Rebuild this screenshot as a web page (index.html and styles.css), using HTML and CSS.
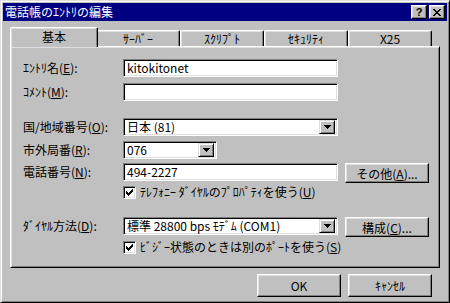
FILE: index.html
```html
<!DOCTYPE html>
<html lang="ja">
<head>
<meta charset="utf-8">
<title>電話帳のｴﾝﾄﾘの編集</title>
<link rel="stylesheet" href="styles.css">
</head>
<body>
<div class="window">
  <div class="titlebar">
    <span class="title">電話帳のｴﾝﾄﾘの編集</span>
    <div class="tb-buttons">
      <div class="tb-btn help">?</div>
      <div class="tb-btn close">
        <svg width="8" height="7" viewBox="0 0 8 7" shape-rendering="crispEdges"><path d="M0 0h2v1h-2zM6 0h2v1h-2zM1 1h2v1h-2zM5 1h2v1h-2zM2 2h4v1h-4zM3 3h2v1h-2zM2 4h4v1h-4zM1 5h2v1h-2zM5 5h2v1h-2zM0 6h2v1h-2zM6 6h2v1h-2z" fill="#000"/></svg>
      </div>
    </div>
  </div>
  <div class="body">
    <div class="tabs">
      <div class="tab active">基本</div>
      <div class="tab">ｻｰﾊﾞｰ</div>
      <div class="tab">ｽｸﾘﾌﾟﾄ</div>
      <div class="tab">ｾｷｭﾘﾃｨ</div>
      <div class="tab">X25</div>
    </div>
    <div class="panel">
      <div class="row r1">
        <div class="label">ｴﾝﾄﾘ名(<u>E</u>):</div>
        <div class="field wide">kitokitonet</div>
      </div>
      <div class="row r2">
        <div class="label">ｺﾒﾝﾄ(<u>M</u>):</div>
        <div class="field wide"></div>
      </div>
      <div class="row r3">
        <div class="label">国/地域番号(<u>O</u>):</div>
        <div class="field wide select"><span class="val">日本 (81)</span><span class="arrow"><svg width="7" height="4" viewBox="0 0 7 4" shape-rendering="crispEdges"><path d="M0 0h7v1h-7zM1 1h5v1h-5zM2 2h3v1h-3zM3 3h1v1h-1z" fill="#000"/></svg></span></div>
      </div>
      <div class="row r4">
        <div class="label">市外局番(<u>R</u>):</div>
        <div class="field narrow select"><span class="val">076</span><span class="arrow"><svg width="7" height="4" viewBox="0 0 7 4" shape-rendering="crispEdges"><path d="M0 0h7v1h-7zM1 1h5v1h-5zM2 2h3v1h-3zM3 3h1v1h-1z" fill="#000"/></svg></span></div>
      </div>
      <div class="row r5">
        <div class="label">電話番号(<u>N</u>):</div>
        <div class="field wide">494-2227</div>
        <div class="btn side">その他(<u>A</u>)...</div>
      </div>
      <div class="check-row c1">
        <span class="checkbox"><svg width="9" height="9" viewBox="0 0 9 9" shape-rendering="crispEdges"><path d="M7 1h1v1h-1zM6 2h2v1h-2zM1 3h1v1h-1zM5 3h3v1h-3zM1 4h2v1h-2zM4 4h3v1h-3zM1 5h5v1h-5zM2 6h3v1h-3zM3 7h1v1h-1z" fill="#000"/></svg></span>
        <span class="check-label">ﾃﾚﾌｫﾆｰ ﾀﾞｲﾔﾙのﾌﾟﾛﾊﾟﾃｨを使う(<u>U</u>)</span>
      </div>
      <div class="row r6">
        <div class="label">ﾀﾞｲﾔﾙ方法(<u>D</u>):</div>
        <div class="field wide select"><span class="val">標準 28800 bps ﾓﾃﾞﾑ (COM1)</span><span class="arrow"><svg width="7" height="4" viewBox="0 0 7 4" shape-rendering="crispEdges"><path d="M0 0h7v1h-7zM1 1h5v1h-5zM2 2h3v1h-3zM3 3h1v1h-1z" fill="#000"/></svg></span></div>
        <div class="btn side">構成(<u>C</u>)...</div>
      </div>
      <div class="check-row c2">
        <span class="checkbox"><svg width="9" height="9" viewBox="0 0 9 9" shape-rendering="crispEdges"><path d="M7 1h1v1h-1zM6 2h2v1h-2zM1 3h1v1h-1zM5 3h3v1h-3zM1 4h2v1h-2zM4 4h3v1h-3zM1 5h5v1h-5zM2 6h3v1h-3zM3 7h1v1h-1z" fill="#000"/></svg></span>
        <span class="check-label">ﾋﾞｼﾞｰ状態のときは別のﾎﾟｰﾄを使う(<u>S</u>)</span>
      </div>
    </div>
    <div class="footer">
      <div class="btn dlg">OK</div>
      <div class="btn dlg">ｷｬﾝｾﾙ</div>
    </div>
  </div>
</div>
</body>
</html>
```

FILE: styles.css
```css
* { box-sizing: border-box; }
html, body { margin: 0; padding: 0; background: #c0c0c0; }
body {
  font-family: "MS UI Gothic", "Noto Sans CJK JP", sans-serif;
  font-size: 12px;
  color: #000;
}
u { text-decoration: underline; text-underline-offset: 1px; }

.window {
  width: 450px;
  height: 303px;
  background: #c0c0c0;
  border: 1px solid;
  border-color: #dfdfdf #000 #000 #dfdfdf;
  box-shadow: inset 1px 1px #fff, inset -1px -1px #808080;
  padding: 2px;
  display: flex;
  flex-direction: column;
}

.titlebar {
  height: 18px;
  background: #000080;
  color: #fff;
  display: flex;
  align-items: center;
  justify-content: space-between;
  padding: 0 2px 0 2px;
}
.title { font-size: 12px; line-height: 18px; letter-spacing: 0; }
.tb-buttons { display: flex; gap: 2px; }
.tb-btn {
  width: 16px;
  height: 14px;
  background: #c0c0c0;
  border: 1px solid;
  border-color: #fff #000 #000 #fff;
  box-shadow: inset -1px -1px #808080, inset 1px 1px #dfdfdf;
  display: flex;
  align-items: center;
  justify-content: center;
  color: #000;
}
.tb-btn.help {
  font-family: "Liberation Sans", sans-serif;
  font-weight: bold;
  font-size: 11px;
  line-height: 12px;
}

.body {
  flex: 1;
  display: flex;
  flex-direction: column;
  padding: 6px 7px 0 7px;
}

.tabs {
  display: flex;
  height: 19px;
  padding-left: 2px;
  position: relative;
  z-index: 1;
}
.tab {
  width: 84px;
  height: 16px;
  margin-top: 3px;
  background: #c0c0c0;
  border-top: 1px solid #fff;
  border-left: 1px solid #fff;
  border-right: 1px solid #000;
  border-radius: 2px 2px 0 0;
  box-shadow: inset -1px 0 #808080, inset 1px 1px #dfdfdf;
  text-align: center;
  line-height: 15px;
}
.tab.active {
  width: 88px;
  height: 20px;
  margin: 0 -2px 0 -2px;
  position: relative;
  z-index: 2;
  line-height: 17px;
}

.panel {
  width: 430px;
  height: 222px;
  border: 1px solid;
  border-color: #fff #000 #000 #fff;
  box-shadow: inset 1px 1px #dfdfdf, inset -1px -1px #808080;
  padding-left: 12px;
  display: flex;
  flex-direction: column;
}

.row {
  display: flex;
  align-items: flex-start;
}
.label {
  width: 100px;
  height: 18px;
  line-height: 18px;
  white-space: nowrap;
}
.field {
  height: 18px;
  background: #fff;
  border: 1px solid;
  border-color: #808080 #fff #fff #808080;
  box-shadow: inset 1px 1px #000, inset -1px -1px #dfdfdf;
  padding: 0 0 0 3px;
  line-height: 16px;
  white-space: nowrap;
  display: flex;
  align-items: center;
}
.field.wide { width: 215px; }
.field.narrow { width: 94px; }
.select { padding-right: 2px; }
.select .val { flex: 1; overflow: hidden; }
.arrow {
  width: 16px;
  height: 14px;
  background: #c0c0c0;
  border: 1px solid;
  border-color: #dfdfdf #000 #000 #dfdfdf;
  box-shadow: inset 1px 1px #fff, inset -1px -1px #808080;
  display: flex;
  align-items: center;
  justify-content: center;
}
.arrow svg { display: block; }

.r1 { margin-top: 12px; }
.r2 { margin-top: 6px; }
.r3 { margin-top: 17px; }
.r4 { margin-top: 5px; }
.r5 { margin-top: 4px; }
.c1 { margin-top: 2px; }
.r6 { margin-top: 18px; }
.c2 { margin-top: 3px; }

.btn {
  background: #c0c0c0;
  border: 1px solid;
  border-color: #fff #000 #000 #fff;
  box-shadow: inset -1px -1px #808080, inset 1px 1px #dfdfdf;
  display: flex;
  align-items: center;
  justify-content: center;
  white-space: nowrap;
}
.btn.side {
  width: 84px;
  height: 20px;
  margin-left: 7px;
}

.check-row {
  display: flex;
  align-items: center;
  padding-left: 100px;
  height: 14px;
}
.checkbox {
  width: 13px;
  height: 13px;
  background: #fff;
  border: 1px solid;
  border-color: #808080 #fff #fff #808080;
  box-shadow: inset 1px 1px #000, inset -1px -1px #dfdfdf;
  display: flex;
  align-items: center;
  justify-content: center;
  margin-right: 4px;
}
.checkbox svg { display: block; }
.check-label { white-space: nowrap; line-height: 14px; }

.footer {
  display: flex;
  justify-content: flex-end;
  gap: 7px;
  padding-right: 8px;
  margin-top: 6px;
}
.btn.dlg {
  width: 84px;
  height: 23px;
}
```
